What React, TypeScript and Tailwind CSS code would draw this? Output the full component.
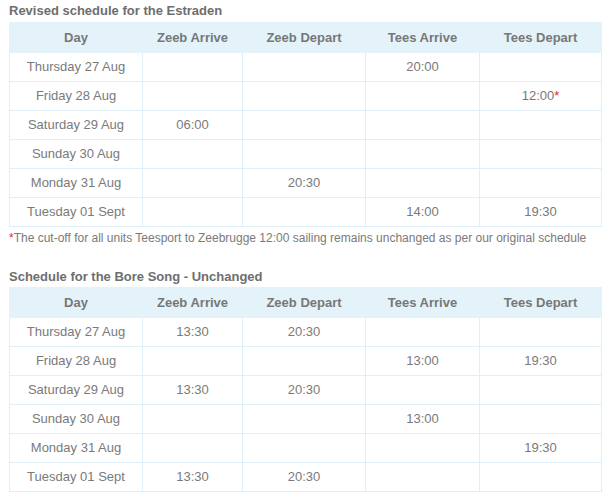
import React from "react"

type Row = [string, string, string, string, string]

const headers = ["Day", "Zeeb Arrive", "Zeeb Depart", "Tees Arrive", "Tees Depart"]
const widths = ["w-[133px]", "w-[100px]", "w-[123px]", "w-[114px]", "w-[122px]"]

const revised: Row[] = [
	["Thursday 27 Aug", "", "", "20:00", ""],
	["Friday 28 Aug", "", "", "", "12:00*"],
	["Saturday 29 Aug", "06:00", "", "", ""],
	["Sunday 30 Aug", "", "", "", ""],
	["Monday 31 Aug", "", "20:30", "", ""],
	["Tuesday 01 Sept", "", "", "14:00", "19:30"],
]

const unchanged: Row[] = [
	["Thursday 27 Aug", "13:30", "20:30", "", ""],
	["Friday 28 Aug", "", "", "13:00", "19:30"],
	["Saturday 29 Aug", "13:30", "20:30", "", ""],
	["Sunday 30 Aug", "", "", "13:00", ""],
	["Monday 31 Aug", "", "", "", "19:30"],
	["Tuesday 01 Sept", "13:30", "20:30", "", ""],
]

const Cell = ({value}: {value: string}) => {
	if (value.endsWith("*")) {
		return <>{value.slice(0, -1)}<span className="text-[#e8262a]">*</span></>
	}
	return <>{value}</>
}

const Schedule = ({title, rows, titleClass}: {title: string, rows: Row[], titleClass: string}) => (
	<div>
		<h2 className={`${titleClass} text-[13px] font-bold text-[#6e6e6e]`}>{title}</h2>
		<table className="w-[592px] table-fixed border-collapse text-[13px] text-[#7a7a7a]">
			<thead>
				<tr className="bg-[#e4f3fa]">
					{headers.map((h, i) =>
						<th key={h} className={`${widths[i]} h-[30px] p-0 font-bold text-[#777] border border-[#e4f3fa]`}>{h}</th>
					)}
				</tr>
			</thead>
			<tbody>
				{rows.map(row =>
					<tr key={row[0]}>
						{row.map((v, i) =>
							<td key={i} className="h-[29px] p-0 text-center border border-[#e0eff7]">
								<Cell value={v}/>
							</td>
						)}
					</tr>
				)}
			</tbody>
		</table>
	</div>
)

export default function App() {
	return (
		<div className="w-[614px] h-[503px] bg-white pl-[9px] font-['Liberation_Sans',Arial,sans-serif]">
			<Schedule title="Revised schedule for the Estraden" rows={revised} titleClass="h-[22px] leading-[22px]"/>
			<p className="h-[22px] leading-[22px] text-[12px] text-[#7a7a7a] mb-[18px]">
				<span className="text-[#e8262a]">*</span>The cut-off for all units Teesport to Zeebrugge 12:00 sailing remains unchanged as per our original schedule
			</p>
			<Schedule title="Schedule for the Bore Song - Unchanged" rows={unchanged} titleClass="h-[20px] leading-[20px]"/>
		</div>
	)
}
